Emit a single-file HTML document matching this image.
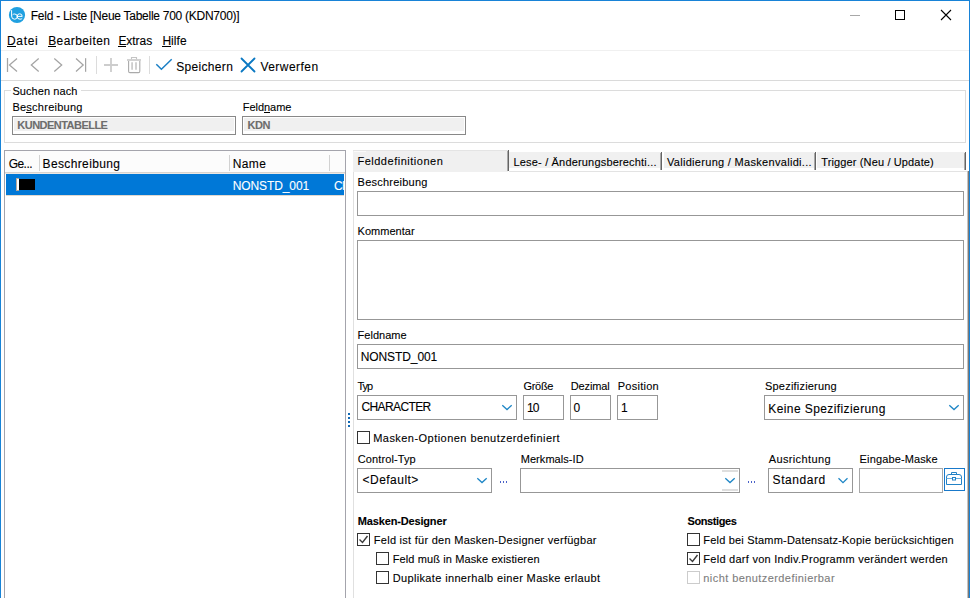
<!DOCTYPE html>
<html><head><meta charset="utf-8"><style>
html,body{margin:0;padding:0;width:970px;height:598px;overflow:hidden;background:#fff;}
body{position:relative;font-family:"Liberation Sans", sans-serif;}
.t{position:absolute;white-space:nowrap;line-height:20px;font-family:"Liberation Sans", sans-serif;color:#000;-webkit-text-stroke:0.1px currentColor;}
.ln,.b{position:absolute;box-sizing:border-box;}
</style></head><body>
<!-- window border -->
<div class="b" style="left:0;top:0;width:970px;height:1px;background:#1883d7"></div>
<div class="b" style="left:0;top:0;width:1px;height:598px;background:#1883d7"></div>
<div class="b" style="left:969px;top:0;width:1px;height:598px;background:#1883d7"></div>
<!-- title bar -->
<svg class="b" style="left:0;top:0" width="970" height="50">
  <circle cx="17" cy="15" r="8.1" fill="#20a0e0"/>
  <path d="M11.6 10.2 V16 Q11.6 19.2 14.6 19.2 Q17.3 19.2 17.3 16.6 Q17.3 14 14.6 14 Q13.2 14 12.6 14.8" fill="none" stroke="#fff" stroke-width="1.0"/>
  <path d="M16.8 16.4 H22.2 Q22.2 13.8 19.7 13.8 Q17.2 13.8 17.2 16.5 Q17.2 19.2 20 19.2 Q21.4 19.2 22.2 18.4" fill="none" stroke="#fff" stroke-width="1.0"/>
  <line x1="850" y1="15.5" x2="860" y2="15.5" stroke="#a8a8a8" stroke-width="1"/>
  <rect x="895.5" y="10.5" width="9" height="9" fill="none" stroke="#000" stroke-width="1"/>
  <path d="M941 10 L951 20 M951 10 L941 20" stroke="#000" stroke-width="1.1"/>
</svg>
<div class="b" style="left:1px;top:50px;width:968px;height:1px;background:#f0f0f0"></div>
<div class="b" style="left:1px;top:80px;width:968px;height:1px;background:#dadada"></div>
<!-- toolbar icons -->
<svg class="b" style="left:0;top:50px" width="330" height="30">
  <g fill="none" stroke="#a4a4a4" stroke-width="1.25">
    <path d="M7.5 8 V22"/><path d="M17 8.5 L9.5 15 L17 21.5"/>
    <path d="M38.7 8.5 L31.3 15 L38.7 21.5"/>
    <path d="M54.3 8.5 L61.7 15 L54.3 21.5"/>
    <path d="M76 8.5 L83.2 15 L76 21.5"/><path d="M85.6 8.2 V21.8"/>
  </g>
  <path d="M96.5 6 V24" stroke="#dcdcdc" stroke-width="1"/>
  <g fill="none" stroke="#cdcdcd" stroke-width="1.8">
    <path d="M104 15 H118 M111 8 V22"/>
    <path d="M127 10 H141"/>
    <path d="M132.1 12.3 V19.8 M136 12.3 V19.8"/>
  </g>
  <g fill="none" stroke="#aaaaaa" stroke-width="1.1">
    <path d="M128.6 11 V21.2 Q128.6 22.6 130 22.6 H138.4 Q139.8 22.6 139.8 21.2 V11"/>
    <path d="M131.5 9.3 V7.5 H136.5 V9.3" stroke="#c4c4c4"/>
  </g>
  <path d="M149.5 6 V24" stroke="#dcdcdc" stroke-width="1"/>
  <path d="M156.3 14.3 L161.4 19.3 L171.7 9.3" fill="none" stroke="#1a7fc5" stroke-width="1.5"/>
  <path d="M241.5 8.5 L254.5 21.5 M254.5 8.5 L241.5 21.5" fill="none" stroke="#0a78c2" stroke-width="1.8" stroke-linecap="round"/>
</svg>
<!-- search group -->
<div class="b" style="left:4px;top:90px;width:962px;height:53px;border:1px solid #dcdcdc"></div>
<div class="b" style="left:11px;top:88px;width:70px;height:6px;background:#fff"></div>
<div class="b" style="left:12px;top:116px;width:224px;height:19px;border:1px solid #888;background:#fff"></div><div class="b" style="left:14px;top:118px;width:220px;height:13px;background:#f0f0f0"></div>
<div class="b" style="left:242px;top:116px;width:224px;height:19px;border:1px solid #888;background:#fff"></div><div class="b" style="left:244px;top:118px;width:220px;height:13px;background:#f0f0f0"></div>
<!-- list -->
<div class="b" style="left:4px;top:150px;width:342px;height:460px;border:1px solid #a4a4ac"></div>
<div class="b" style="left:5px;top:151px;width:340px;height:21px;background:#fcfcfc"></div>
<div class="b" style="left:5px;top:172px;width:340px;height:1px;background:#d8d4d0"></div><div class="b" style="left:5px;top:173px;width:340px;height:1px;background:#ebe8e5"></div>
<div class="b" style="left:39px;top:155px;width:1px;height:16px;background:#d2d2d2"></div>
<div class="b" style="left:229px;top:155px;width:1px;height:16px;background:#d2d2d2"></div>
<div class="b" style="left:329px;top:155px;width:1px;height:16px;background:#d2d2d2"></div>
<div class="b" style="left:6px;top:174px;width:338px;height:21px;background:#0078d7"></div><div class="b" style="left:6px;top:195px;width:338px;height:1px;background:#e0d8d0"></div>
<div class="b" style="left:16px;top:178px;width:3px;height:13px;background:#b8a89a"></div><div class="b" style="left:17px;top:179px;width:2px;height:11px;background:#fff"></div>
<div class="b" style="left:19px;top:179px;width:16px;height:11px;background:#000"></div>
<div class="b" style="left:330px;top:170px;width:14px;height:30px;overflow:hidden">
  <div class="t" style="left:4px;top:6px;font-size:12px;color:#fff;letter-spacing:-0.6px">CH</div>
</div>
<!-- splitter dots -->
<div class="b" style="left:348px;top:413px;width:2px;height:2px;background:#1068b4"></div>
<div class="b" style="left:348px;top:417px;width:2px;height:2px;background:#1068b4"></div>
<div class="b" style="left:348px;top:421px;width:2px;height:2px;background:#1068b4"></div>
<div class="b" style="left:348px;top:425px;width:2px;height:2px;background:#1068b4"></div>
<!-- tabs -->
<div class="b" style="left:353px;top:150px;width:155px;height:22px;background:#f0f0f0;border-top:1px solid #e4e4e4"></div><div class="b" style="left:354px;top:151px;width:12px;height:1px;background:#fafafa"></div>
<div class="b" style="left:507px;top:151px;width:1px;height:20px;background:#a8a8a8"></div><div class="b" style="left:508px;top:150px;width:1px;height:21px;background:#646464"></div>
<div class="b" style="left:509px;top:152px;width:152px;height:16px;background:#f0f0f0"></div>
<div class="b" style="left:660px;top:153px;width:1px;height:17px;background:#a8a8a8"></div><div class="b" style="left:661px;top:152px;width:1px;height:18px;background:#646464"></div>
<div class="b" style="left:664px;top:152px;width:151px;height:16px;background:#f0f0f0"></div>
<div class="b" style="left:814px;top:153px;width:1px;height:17px;background:#a8a8a8"></div><div class="b" style="left:815px;top:152px;width:1px;height:18px;background:#646464"></div>
<div class="b" style="left:817px;top:152px;width:148px;height:16px;background:#f0f0f0"></div>
<div class="b" style="left:964px;top:153px;width:1px;height:17px;background:#a8a8a8"></div><div class="b" style="left:965px;top:152px;width:1px;height:18px;background:#646464"></div>
<div class="b" style="left:509px;top:171px;width:459px;height:1px;background:#e3e3e3"></div>
<!-- tab page borders -->
<div class="b" style="left:353px;top:172px;width:1px;height:426px;background:#e0e0e0"></div>
<div class="b" style="left:967px;top:171px;width:1px;height:427px;background:#c4c4c4"></div>
<div class="b" style="left:968px;top:171px;width:1px;height:427px;background:#7f7a75"></div>
<!-- form boxes -->
<div class="b" style="left:357px;top:191px;width:607px;height:25px;border:1px solid #979797"></div>
<div class="b" style="left:357px;top:240px;width:607px;height:80px;border:1px solid #979797"></div>
<div class="b" style="left:357px;top:344px;width:607px;height:25px;border:1px solid #979797"></div>
<div class="b" style="left:357px;top:395px;width:160px;height:25px;border:1px solid #979797"></div>
<div class="b" style="left:523px;top:395px;width:41px;height:25px;border:1px solid #979797"></div>
<div class="b" style="left:570px;top:395px;width:41px;height:25px;border:1px solid #979797"></div>
<div class="b" style="left:617px;top:395px;width:41px;height:25px;border:1px solid #979797"></div>
<div class="b" style="left:764px;top:395px;width:200px;height:25px;border:1px solid #979797"></div>
<div class="b" style="left:357px;top:468px;width:135px;height:25px;border:1px solid #979797"></div>
<div class="b" style="left:520px;top:468px;width:220px;height:25px;border:1px solid #979797"></div>
<div class="b" style="left:722px;top:470px;width:16px;height:2px;background:#dedede"></div>
<div class="b" style="left:722px;top:489px;width:16px;height:2px;background:#dedede"></div>
<div class="b" style="left:768px;top:468px;width:85px;height:25px;border:1px solid #979797"></div>
<div class="b" style="left:859px;top:468px;width:84px;height:25px;border:1px solid #a8a8a8"></div>
<div class="b" style="left:944px;top:468px;width:21px;height:23px;border:1px solid #1979ca"></div>
<svg class="b" style="left:0;top:0" width="970" height="598">
  <g fill="none" stroke="#1e86c6" stroke-width="1.3">
    <path d="M502.3 405.3 L507 409.6 L511.7 405.3"/>
    <path d="M949.3 405.3 L954 409.6 L958.7 405.3"/>
    <path d="M477.3 478.3 L482 482.6 L486.7 478.3"/>
    <path d="M725.3 478.3 L730 482.6 L734.7 478.3"/>
    <path d="M838.5 478.3 L843 482.6 L847.5 478.3"/>
  </g>
  <g fill="#4a62c8">
    <rect x="500" y="481" width="1" height="2"/><rect x="503" y="481" width="1" height="2"/><rect x="506" y="481" width="1" height="2"/>
    <rect x="748" y="481" width="1" height="2"/><rect x="751" y="481" width="1" height="2"/><rect x="754" y="481" width="1" height="2"/>
  </g>
  <g fill="none" stroke="#2282c6" stroke-width="1">
    <path d="M946.5 477 Q946.5 474.5 949 474.5 H959 Q961.5 474.5 961.5 477 V484.5 H946.5 Z"/>
    <path d="M951.5 474.5 V472.5 H956.5 V474.5"/>
    <path d="M946.5 478.5 H952.5 M955.5 478.5 H961.5" stroke="#6aaee0" stroke-width="1.2"/>
    <rect x="952.5" y="477.5" width="3" height="2.5"/>
  </g>
  <!-- checkboxes -->
  <g fill="#fff" stroke="#333" stroke-width="1">
    <rect x="357.5" y="431.5" width="12" height="12"/>
    <rect x="357.5" y="533.5" width="12" height="12"/>
    <rect x="376.5" y="552.5" width="12" height="12"/>
    <rect x="376.5" y="571.5" width="12" height="12"/>
    <rect x="687.5" y="533.5" width="12" height="12"/>
    <rect x="687.5" y="552.5" width="12" height="12"/>
    <rect x="687.5" y="571.5" width="12" height="12" stroke="#cccccc"/>
  </g>
  <g fill="none" stroke="#3a3a3a" stroke-width="1.4">
    <path d="M359.5 539.5 L362.5 542.5 L367.5 536"/>
    <path d="M689.5 558.5 L692.5 561.5 L697.5 555"/>
  </g>
</svg>

<div class="t" style="left:30.80px;top:6px;font-size:12px;letter-spacing:-0.267px;">Feld - Liste [Neue Tabelle 700 (KDN700)]</div>
<div class="t" style="left:7.00px;top:31px;font-size:12px;letter-spacing:0.663px;">Datei</div>
<div class="ln" style="left:7px;top:46px;width:9px;height:1px;background:#000"></div>
<div class="t" style="left:48.20px;top:31px;font-size:12px;letter-spacing:0.415px;">Bearbeiten</div>
<div class="ln" style="left:48px;top:46px;width:8px;height:1px;background:#000"></div>
<div class="t" style="left:118.40px;top:31px;font-size:12px;letter-spacing:-0.042px;">Extras</div>
<div class="ln" style="left:118px;top:46px;width:8px;height:1px;background:#000"></div>
<div class="t" style="left:162.40px;top:31px;font-size:12px;letter-spacing:0.042px;">Hilfe</div>
<div class="ln" style="left:162px;top:46px;width:9px;height:1px;background:#000"></div>
<div class="t" style="left:176.20px;top:57px;font-size:12px;letter-spacing:0.330px;">Speichern</div>
<div class="t" style="left:260.40px;top:57px;font-size:12px;letter-spacing:0.468px;">Verwerfen</div>
<div class="t" style="left:12.40px;top:81px;font-size:11px;letter-spacing:0.080px;">Suchen nach</div>
<div class="t" style="left:12.40px;top:97px;font-size:11px;letter-spacing:0.250px;">Beschreibung</div>
<div class="ln" style="left:26px;top:112px;width:6px;height:1px;background:#000"></div>
<div class="t" style="left:242.70px;top:97px;font-size:11px;letter-spacing:-0.028px;">Feldname</div>
<div class="ln" style="left:264px;top:112px;width:6px;height:1px;background:#000"></div>
<div class="t" style="left:17.30px;top:115px;font-size:11px;font-weight:bold;color:#6d6d6d;letter-spacing:-0.527px;">KUNDENTABELLE</div>
<div class="t" style="left:247.60px;top:115px;font-size:11px;font-weight:bold;color:#6d6d6d;letter-spacing:-0.494px;">KDN</div>
<div class="t" style="left:8.70px;top:154px;font-size:12px;letter-spacing:-0.544px;">Ge...</div>
<div class="t" style="left:42.60px;top:154px;font-size:12px;letter-spacing:0.363px;">Beschreibung</div>
<div class="t" style="left:232.70px;top:154px;font-size:12px;letter-spacing:0.388px;">Name</div>
<div class="t" style="left:232.70px;top:176px;font-size:12px;color:#fff;letter-spacing:-0.099px;">NONSTD_001</div>
<div class="t" style="left:357.40px;top:151px;font-size:11px;letter-spacing:0.517px;">Felddefinitionen</div>
<div class="t" style="left:513.50px;top:152px;font-size:11px;letter-spacing:0.176px;">Lese- / Änderungsberechti...</div>
<div class="t" style="left:666.90px;top:152px;font-size:11px;letter-spacing:0.308px;">Validierung / Maskenvalidi...</div>
<div class="t" style="left:821.20px;top:152px;font-size:11px;letter-spacing:0.139px;">Trigger (Neu / Update)</div>
<div class="t" style="left:357.60px;top:172px;font-size:11px;letter-spacing:0.232px;">Beschreibung</div>
<div class="t" style="left:357.60px;top:221px;font-size:11px;letter-spacing:0.014px;">Kommentar</div>
<div class="t" style="left:357.60px;top:325px;font-size:11px;letter-spacing:0.015px;">Feldname</div>
<div class="t" style="left:360.70px;top:347px;font-size:12px;letter-spacing:-0.087px;">NONSTD_001</div>
<div class="t" style="left:357.40px;top:376px;font-size:11px;letter-spacing:-1.006px;">Typ</div>
<div class="t" style="left:523.50px;top:376px;font-size:11px;letter-spacing:-0.314px;">Größe</div>
<div class="t" style="left:570.70px;top:376px;font-size:11px;letter-spacing:-0.114px;">Dezimal</div>
<div class="t" style="left:617.80px;top:376px;font-size:11px;letter-spacing:0.241px;">Position</div>
<div class="t" style="left:765.00px;top:376px;font-size:11px;letter-spacing:0.202px;">Spezifizierung</div>
<div class="t" style="left:361.50px;top:397px;font-size:12px;letter-spacing:-0.613px;">CHARACTER</div>
<div class="t" style="left:527.00px;top:398px;font-size:12px;letter-spacing:-0.974px;">10</div>
<div class="t" style="left:573.50px;top:398px;font-size:12px;">0</div>
<div class="t" style="left:621.00px;top:398px;font-size:12px;">1</div>
<div class="t" style="left:768.30px;top:399px;font-size:12px;letter-spacing:0.404px;">Keine Spezifizierung</div>
<div class="t" style="left:373.20px;top:428px;font-size:11px;letter-spacing:0.457px;">Masken-Optionen benutzerdefiniert</div>
<div class="t" style="left:357.80px;top:449px;font-size:11px;letter-spacing:0.096px;">Control-Typ</div>
<div class="t" style="left:520.70px;top:449px;font-size:11px;letter-spacing:0.061px;">Merkmals-ID</div>
<div class="t" style="left:768.70px;top:449px;font-size:11px;letter-spacing:0.373px;">Ausrichtung</div>
<div class="t" style="left:859.60px;top:449px;font-size:11px;letter-spacing:0.132px;">Eingabe-Maske</div>
<div class="t" style="left:362.60px;top:470px;font-size:12px;letter-spacing:0.459px;">&lt;Default&gt;</div>
<div class="t" style="left:772.60px;top:470px;font-size:12px;letter-spacing:0.553px;">Standard</div>
<div class="t" style="left:357.80px;top:511px;font-size:11px;font-weight:bold;letter-spacing:-0.158px;">Masken-Designer</div>
<div class="t" style="left:687.50px;top:511px;font-size:11px;font-weight:bold;letter-spacing:-0.394px;">Sonstiges</div>
<div class="t" style="left:373.80px;top:530px;font-size:11px;letter-spacing:0.271px;">Feld ist für den Masken-Designer verfügbar</div>
<div class="t" style="left:392.70px;top:549px;font-size:11px;letter-spacing:0.117px;">Feld muß in Maske existieren</div>
<div class="t" style="left:392.70px;top:568px;font-size:11px;letter-spacing:0.353px;">Duplikate innerhalb einer Maske erlaubt</div>
<div class="t" style="left:703.30px;top:530px;font-size:11px;letter-spacing:0.196px;">Feld bei Stamm-Datensatz-Kopie berücksichtigen</div>
<div class="t" style="left:703.30px;top:549px;font-size:11px;letter-spacing:0.266px;">Feld darf von Indiv.Programm verändert werden</div>
<div class="t" style="left:703.30px;top:568px;font-size:11px;color:#7d7d7d;letter-spacing:0.424px;">nicht benutzerdefinierbar</div>
</body></html>
